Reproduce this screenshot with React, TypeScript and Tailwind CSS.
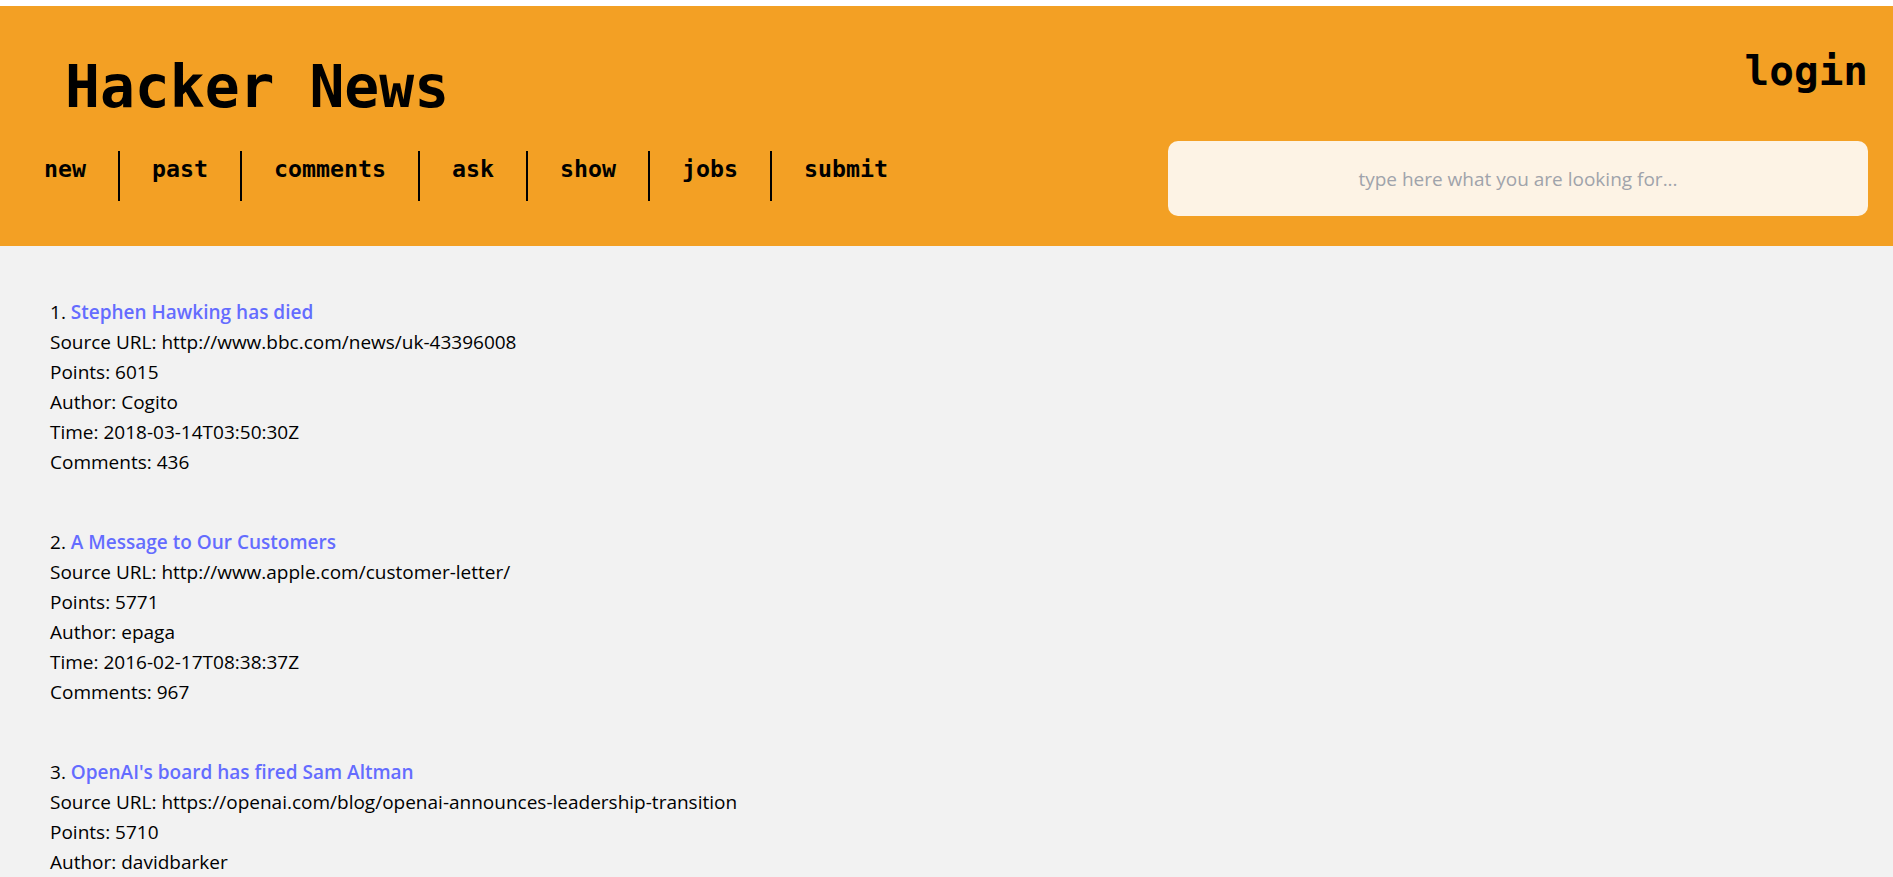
import { useState } from 'react';

interface Story {
  title: string;
  url: string;
  points: number;
  author: string;
  time: string;
  comments: number;
}

const STORIES: Story[] = [
  {
    title: 'Stephen Hawking has died',
    url: 'http://www.bbc.com/news/uk-43396008',
    points: 6015,
    author: 'Cogito',
    time: '2018-03-14T03:50:30Z',
    comments: 436,
  },
  {
    title: 'A Message to Our Customers',
    url: 'http://www.apple.com/customer-letter/',
    points: 5771,
    author: 'epaga',
    time: '2016-02-17T08:38:37Z',
    comments: 967,
  },
  {
    title: "OpenAI's board has fired Sam Altman",
    url: 'https://openai.com/blog/openai-announces-leadership-transition',
    points: 5710,
    author: 'davidbarker',
    time: '2023-11-17T20:28:50Z',
    comments: 2553,
  },
];

const NAV = ['new', 'past', 'comments', 'ask', 'show', 'jobs', 'submit'];

const mono = "font-['DejaVu_Sans_Mono',monospace]";

export default function App() {
  const [query, setQuery] = useState('');

  return (
    <div className="min-h-screen bg-[#f2f2f2] border-t-[6px] border-white font-['Open_Sans',sans-serif] text-black">
      <header className="flex h-[240px] justify-between bg-[#f3a024]">
        <div className="flex flex-col">
          <h1 className={`${mono} pl-[65px] pt-[52px] text-[58px] leading-none font-bold`}>Hacker News</h1>
          <ul className={`${mono} ml-[12px] mt-[35px] flex text-[23.25px] font-bold leading-none`}>
            {NAV.map((item, i) => (
              <li
                key={item}
                className={`h-[50px] px-[32px] pt-[6px] ${i < NAV.length - 1 ? 'border-r-2 border-black' : ''}`}
              >
                <a href="#" className="cursor-pointer">{item}</a>
              </li>
            ))}
          </ul>
        </div>
        <div className="flex flex-col items-end pr-[25px]">
          <a href="#" className={`${mono} mt-[45px] text-[41px] font-bold leading-none`}>login</a>
          <input
            value={query}
            onChange={(e) => setQuery(e.target.value)}
            placeholder="type here what you are looking for..."
            className="mt-[49px] h-[75px] w-[700px] rounded-[10px] bg-[#fdf3e5] text-center text-[19px] outline-none placeholder:text-[#a0a3ab]"
          />
        </div>
      </header>

      <main className="flex flex-col gap-[50px] pl-[50px] pt-[51px] pb-[50px] text-[19px] leading-[30px]">
        {STORIES.map((s, i) => (
          <div key={s.title}>
            <div>
              {i + 1}.{' '}
              <a href={s.url} className="font-semibold text-[#646cff]">
                {s.title}
              </a>
            </div>
            <div>Source URL: {s.url}</div>
            <div>Points: {s.points}</div>
            <div>Author: {s.author}</div>
            <div>Time: {s.time}</div>
            <div>Comments: {s.comments}</div>
          </div>
        ))}
      </main>
    </div>
  );
}
